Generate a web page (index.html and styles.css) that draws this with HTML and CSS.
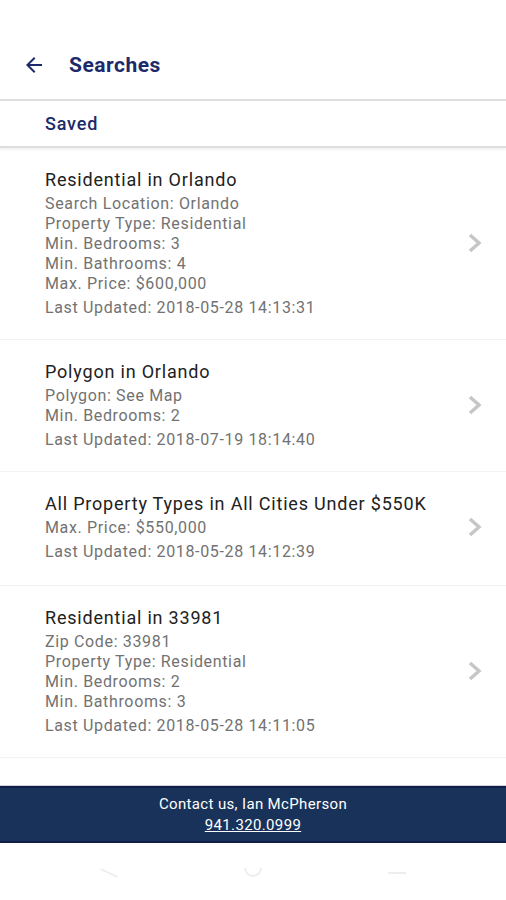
FILE: index.html
```html
<!DOCTYPE html>
<html lang="en">
<head>
  <meta charset="UTF-8" />
  <meta name="viewport" content="width=device-width, initial-scale=1.0" />
  <title>Searches</title>
  <link rel="stylesheet" href="styles.css">
</head>
<body>
  <div class="app">
    <header class="topbar">
      <button class="back" aria-label="Back">
        <svg width="24" height="24" viewBox="0 0 24 24"><path d="M20 11H7.83l5.59-5.59L12 4l-8 8 8 8 1.41-1.41L7.83 13H20v-2z" fill="currentColor"/></svg>
      </button>
      <h1>Searches</h1>
    </header>

    <div class="tab">Saved</div>

    <ul class="search-list">
      <li class="search">
        <div class="search-info">
          <h2>Residential in Orlando</h2>
          <p>Search Location: Orlando</p>
          <p>Property Type: Residential</p>
          <p>Min. Bedrooms: 3</p>
          <p>Min. Bathrooms: 4</p>
          <p>Max. Price: $600,000</p>
          <p class="updated">Last Updated: 2018-05-28 14:13:31</p>
        </div>
        <svg class="chevron" width="15" height="22" viewBox="0 0 15 22"><path d="M3 3l9 8-9 8" /></svg>
      </li>
      <li class="search">
        <div class="search-info">
          <h2>Polygon in Orlando</h2>
          <p>Polygon: See Map</p>
          <p>Min. Bedrooms: 2</p>
          <p class="updated">Last Updated: 2018-07-19 18:14:40</p>
        </div>
        <svg class="chevron" width="15" height="22" viewBox="0 0 15 22"><path d="M3 3l9 8-9 8" /></svg>
      </li>
      <li class="search">
        <div class="search-info">
          <h2>All Property Types in All Cities Under $550K</h2>
          <p>Max. Price: $550,000</p>
          <p class="updated">Last Updated: 2018-05-28 14:12:39</p>
        </div>
        <svg class="chevron" width="15" height="22" viewBox="0 0 15 22"><path d="M3 3l9 8-9 8" /></svg>
      </li>
      <li class="search">
        <div class="search-info">
          <h2>Residential in 33981</h2>
          <p>Zip Code: 33981</p>
          <p>Property Type: Residential</p>
          <p>Min. Bedrooms: 2</p>
          <p>Min. Bathrooms: 3</p>
          <p class="updated">Last Updated: 2018-05-28 14:11:05</p>
        </div>
        <svg class="chevron" width="15" height="22" viewBox="0 0 15 22"><path d="M3 3l9 8-9 8" /></svg>
      </li>
    </ul>

    <footer class="contact">
      <span>Contact us, Ian McPherson</span>
      <a href="#">941.320.0999</a>
    </footer>

    <nav class="sysnav">
      <span class="nav-back"></span>
      <span class="nav-home"></span>
      <span class="nav-recent"></span>
    </nav>
  </div>
</body>
</html>
```

FILE: styles.css
```css
:root {
  --navy: #1c2a6b;
  --footer-bg: #18325a;
  --text-dark: #212121;
  --text-muted: #727272;
  --divider: #dedede;
}

* {
  box-sizing: border-box;
  margin: 0;
  padding: 0;
}

body {
  font-family: Roboto, 'Noto Sans', sans-serif;
  background: #fff;
  color: var(--text-dark);
}

.app {
  width: 506px;
  min-height: 900px;
  display: flex;
  flex-direction: column;
}

.topbar {
  height: 101px;
  padding: 31px 0 0 22px;
  display: flex;
  align-items: center;
  gap: 23px;
  border-bottom: 2px solid var(--divider);
}

.back {
  border: none;
  background: none;
  color: var(--navy);
  display: flex;
  cursor: pointer;
}

.topbar h1 {
  font-size: 21px;
  font-weight: 700;
  color: var(--navy);
  letter-spacing: 0.5px;
}

.tab {
  height: 47px;
  padding: 1px 0 1px 45px;
  display: flex;
  align-items: center;
  font-size: 18px;
  font-weight: 500;
  letter-spacing: 0.8px;
  color: var(--navy);
  border-bottom: 2px solid var(--divider);
  box-shadow: 0 2px 2px rgba(0, 0, 0, 0.05);
}

.search-list {
  list-style: none;
  margin-bottom: 28px;
}

.search {
  display: flex;
  align-items: center;
  padding: 20px 24px 21px 45px;
  border-bottom: 1px solid #f3f3f3;
}

.search:nth-child(3) {
  padding-bottom: 23px;
}

.search-info {
  flex: 1;
}

.search h2 {
  font-size: 18px;
  font-weight: 400;
  line-height: 24px;
  letter-spacing: 0.8px;
  margin-bottom: 2px;
  color: var(--text-dark);
}

.search p {
  font-size: 16px;
  line-height: 20px;
  letter-spacing: 0.65px;
  color: var(--text-muted);
}

.search p.updated {
  margin-top: 4px;
}

.chevron {
  fill: none;
  stroke: #c6c6c6;
  stroke-width: 3.5;
}

.contact {
  height: 57px;
  background: var(--footer-bg);
  border-top: 2px solid #0f1f45;
  border-bottom: 2px solid #0f1f45;
  box-shadow: 0 -1px 0 #cfd0d8;
  display: flex;
  flex-direction: column;
  align-items: center;
  justify-content: center;
  color: #fff;
  font-size: 15px;
  line-height: 21px;
  letter-spacing: 0.35px;
}

.contact a {
  color: #fff;
}

.sysnav {
  height: 59px;
  display: flex;
  justify-content: space-between;
  align-items: center;
  padding: 0 100px;
}

.sysnav span {
  display: block;
}

.nav-back {
  width: 18px;
  height: 2px;
  background: #eee;
  transform: rotate(25deg);
}

.nav-home {
  width: 18px;
  height: 9px;
  border: 2px solid #eee;
  border-top: none;
  border-radius: 0 0 9px 9px;
}

.nav-recent {
  width: 18px;
  height: 2px;
  background: #eee;
}
```
